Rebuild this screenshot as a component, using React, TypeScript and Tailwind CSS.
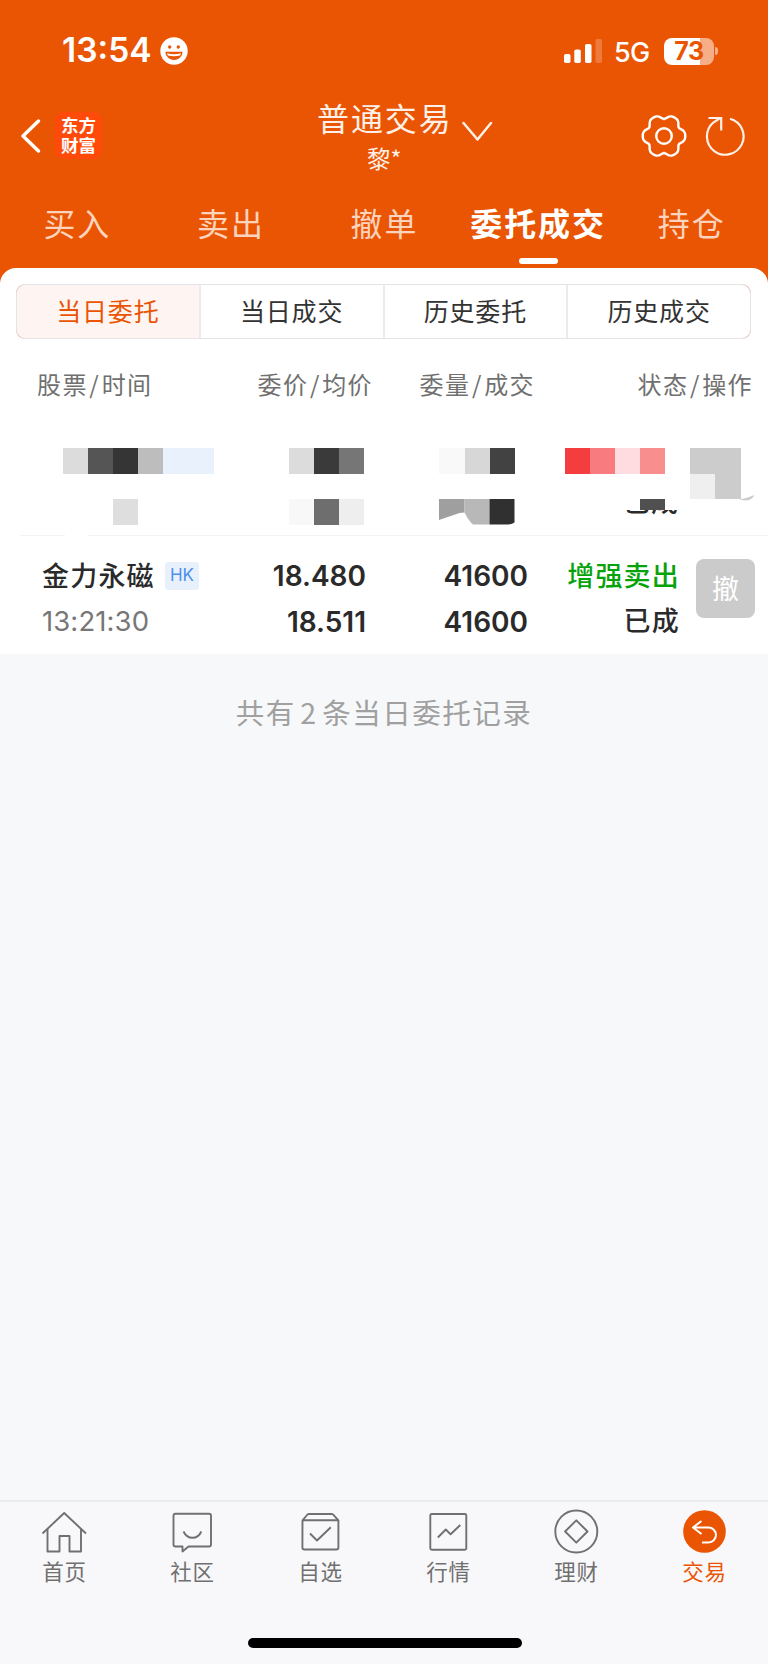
import type { ReactNode } from 'react'

const cjk = "font-['Noto_Sans_CJK_SC',sans-serif]"
const latin = "font-['Inter','Liberation_Sans',sans-serif]"

const tabs = ['买入', '卖出', '撤单', '委托成交', '持仓']
const segments = ['当日委托', '当日成交', '历史委托', '历史成交']

// Mosaic cells covering the hidden order, placed on a 25px grid
const mosaic = [
  'col-start-1 row-start-1 bg-[#dcdcdc]',
  'col-start-2 row-start-1 bg-[#555555]',
  'col-start-3 row-start-1 bg-[#353535]',
  'col-start-4 row-start-1 bg-[#bdbdbd]',
  'col-start-5 col-span-2 row-start-1 bg-[#e8f1fc]',
  'col-start-10 row-start-1 bg-[#dcdcdc]',
  'col-start-11 row-start-1 bg-[#3a3a3a]',
  'col-start-12 row-start-1 bg-[#767676]',
  'col-start-16 row-start-1 bg-[#f9f9f9]',
  'col-start-17 row-start-1 bg-[#d7d7d7]',
  'col-start-18 row-start-1 bg-[#424242]',
  'col-start-21 row-start-1 bg-[#f43d3f]',
  'col-start-22 row-start-1 bg-[#f87c7f]',
  'col-start-23 row-start-1 bg-[#fedcdf]',
  'col-start-24 row-start-1 bg-[#f98e8f]',
  'col-start-26 col-span-2 row-start-1 bg-[#cccccc]',
  'col-start-26 row-start-2 bg-[#efefef]',
  'col-start-27 row-start-2 bg-[#cccccc]',
  'col-start-3 row-start-3 bg-[#dedede]',
  'col-start-10 row-start-3 bg-[#f8f8f8]',
  'col-start-11 row-start-3 bg-[#6e6e6e]',
  'col-start-12 row-start-3 bg-[#eeeeee]',
  'col-start-24 row-start-3 h-[11px] bg-[#505050]',
]

function StatusBar() {
  return (
    <div className={`flex h-[102px] items-center pl-[62px] pr-[50px] text-white ${latin}`}>
      <span className="w-[98px] text-[33.5px] font-semibold leading-none">13:54</span>
      <svg width="28" height="28" viewBox="0 0 28 28">
        <circle cx="14" cy="14" r="13.7" fill="#fff" />
        <circle cx="9.700" cy="10" r="1.700" fill="#ea5504" />
        <circle cx="18.300" cy="10" r="1.700" fill="#ea5504" />
        <path d="M5.500 14.800h17c0 4.600-3.700 8.200-8.500 8.200s-8.500-3.600-8.500-8.200z" fill="#ea5504" />
        <path d="M7 16.300q7 1.800 14 0l-.9 2.300q-6 1.400-12.200 0z" fill="#fff" />
      </svg>
      <svg className="ml-auto" width="40" height="26" viewBox="0 0 40 26">
        <rect x="1" y="16" width="6.500" height="9" rx="1.800" fill="#fff" />
        <rect x="11.300" y="11.500" width="6.500" height="13.500" rx="1.800" fill="#fff" />
        <rect x="22" y="6" width="6.500" height="19" rx="1.800" fill="#fff" />
        <rect x="32.500" y="1" width="6.500" height="24" rx="1.800" fill="#fff" opacity=".22" />
      </svg>
      <span className="ml-[11px] mt-[2px] w-[38px] text-[27px] font-medium leading-none tracking-[-0.6px]">5G</span>
      <div className="ml-[12px] flex h-[27px] w-[50px] items-center justify-center rounded-[8px] bg-[linear-gradient(90deg,#fff_73%,#f5ae86_73%)] text-[25px] font-bold leading-none tracking-[-0.5px] text-[#ea5504]">
        73
      </div>
      <div className="ml-[1px] h-[8px] w-[3px] rounded-r-full bg-[#f5ae86]" />
    </div>
  )
}

function GearIcon() {
  const points = Array.from({ length: 120 }, (_, i) => {
    const a = (i * Math.PI) / 60
    const r = 19.6 + 2.1 * Math.cos(6 * a) - 0.45 * Math.cos(12 * a)
    return `${(23 + r * Math.cos(a)).toFixed(2)},${(23 + r * Math.sin(a)).toFixed(2)}`
  })
  return (
    <svg width="46" height="46" viewBox="0 0 46 46" fill="none" stroke="#fff" strokeWidth="2.400">
      <polygon points={points.join(' ')} strokeLinejoin="round" />
      <circle cx="23" cy="23" r="7.800" />
    </svg>
  )
}

function Header() {
  return (
    <div className="flex h-[80px] items-start">
      <svg className="ml-[20px] mt-[16px]" width="22" height="36" viewBox="0 0 22 36" fill="none" stroke="#fff" strokeWidth="3.500" strokeLinecap="round" strokeLinejoin="round">
        <path d="M18.500 3L3 18l15.500 15" />
      </svg>
      <div className="ml-[13px] mt-[10px] flex h-[47px] w-[47px] flex-col items-center justify-center rounded-[9px] bg-[#ff4a0a] pb-[2px] font-['Noto_Sans_CJK_SC',sans-serif] text-[17.5px] font-bold leading-[19.5px] text-white">
        <span>东方</span>
        <span>财富</span>
      </div>
      <div className="-mt-[1px] ml-[215px] flex w-[134px] flex-col text-[#fff1e8]">
        <span className={`${cjk} whitespace-nowrap text-[32px] leading-[32px] tracking-[1.900px]`}>普通交易</span>
        <span className={`${cjk} mt-[13px] pl-[50px] text-[23.5px] leading-[24px]`}>黎*</span>
      </div>
      <svg className="ml-[11px] mt-[19px]" width="32" height="22" viewBox="0 0 32 22" fill="none" stroke="#fff1e8" strokeWidth="2.500" strokeLinecap="round" strokeLinejoin="round">
        <path d="M1.500 2L15.500 18.500L29 2" />
      </svg>
      <div className="ml-[146.5px] mt-[11px]">
        <GearIcon />
      </div>
      <svg className="ml-[18px] mt-[13px]" width="42" height="42" viewBox="0 0 42 42" fill="none" stroke="#fff1e8" strokeWidth="2.200">
        <path d="M25 3.700A18.300 18.300 0 1 1 8 7.800L14.500 3.500" />
        <path d="M3.500 3h12.700v12.500" />
      </svg>
    </div>
  )
}

function Tabs() {
  return (
    <div className={`flex h-[86px] ${cjk} text-[32px] leading-[80px] tracking-[1.900px]`}>
      {tabs.map((tab) => {
        const active = tab === '委托成交'
        return (
          <div key={tab} className={`flex flex-1 flex-col items-center whitespace-nowrap pl-[1px] ${active ? 'font-bold text-white' : 'font-normal text-[#fcd3bc]'}`}>
            <span className="h-[76px]">{tab}</span>
            {active && <span className="h-[6px] w-[39px] rounded-full bg-white" />}
          </div>
        )
      })}
    </div>
  )
}

function ColumnLabel({ top, bottom, className }: { top: string; bottom: string; className: string }) {
  return (
    <span className={className}>
      {top}
      <span className="mx-[1.5px]">/</span>
      {bottom}
    </span>
  )
}

function HiddenOrder() {
  return (
    <div className="relative h-[123px] w-full pl-[63px] pt-[35px]">
      <div className="grid auto-rows-[25.600px] grid-cols-[repeat(27,25.100px)]">
        {mosaic.map((cell) => (
          <div key={cell} className={cell} />
        ))}
        <svg className="col-span-3 col-start-16 row-start-3" width="76" height="26" viewBox="0 0 76 26">
          <path d="M0 0h25.500v13.500l-5 .5L0 21z" fill="#9f9f9f" />
          <path d="M25.500 0h25v25.600H34q-4-3-8.500-12z" fill="#b8b8b8" />
          <path d="M50.500 0h25v23.500q-3 2-7 2.100h-18z" fill="#303030" />
        </svg>
      </div>
      <div className={`absolute right-[89px] top-[97px] flex h-[5px] items-end overflow-hidden ${cjk} text-[27px] font-medium leading-[28px] tracking-[1px] text-[#2a2a2a]`}>
        <span>已成</span>
      </div>
      <svg className="absolute left-[739px] top-[82px]" width="16" height="6" viewBox="0 0 16 6">
        <path d="M0 4.500Q9 3 15.500 0Q13 5.500 6 5.500z" fill="#cccccc" />
      </svg>
      <div className="absolute bottom-0 left-[20px] right-0 flex h-[1px]">
        <div className="w-[45px] bg-[#f3f3f4]" />
        <div className="ml-[23px] flex-1 bg-[#f3f3f4]" />
      </div>
    </div>
  )
}

function OrderRow() {
  return (
    <div className="flex h-[118px] pt-[17px] text-[#2a2a2a]">
      <div className="w-[218px] pl-[42px]">
        <div className="flex h-[45px] items-center">
          <span className={`${cjk} -mt-[2px] w-[123px] whitespace-nowrap text-[27px] font-medium leading-[42px] tracking-[1.200px]`}>金力永磁</span>
          <span className={`${latin} flex h-[28px] w-[34px] items-center justify-center rounded-[3px] bg-[#e8f1fb] pt-[1px] text-[17px] text-[#4a90f0]`}>HK</span>
        </div>
        <div className={`${latin} flex h-[46px] items-center pt-[2px] text-[27.5px] tracking-[0.1px] text-[#777777]`}>13:21:30</div>
      </div>
      <div className={`${latin} w-[148px] pt-[1px] text-right text-[28px] font-semibold leading-[45.500px]`}>
        <div>18.480</div>
        <div>18.511</div>
      </div>
      <div className={`${latin} w-[162px] pt-[1px] text-right text-[28px] font-semibold leading-[45.500px]`}>
        <div>41600</div>
        <div>41600</div>
      </div>
      <div className={`${cjk} -mt-[1px] w-[152px] text-right text-[27px] font-medium leading-[45px] tracking-[1.200px]`}>
        <div className="h-[45px] text-[#08a30b]">增强卖出</div>
        <div>已成</div>
      </div>
      <div className={`${cjk} ml-[16px] mt-[6px] flex h-[59px] w-[59px] items-center justify-center rounded-[8px] bg-[#cbcbcb] pb-[3px] text-[27px] leading-none text-white`}>
        撤
      </div>
    </div>
  )
}

function NavIcon({ children }: { children: ReactNode }) {
  return (
    <svg width="48" height="48" viewBox="0 0 48 48" fill="none" stroke="#707070" strokeWidth="1.900" strokeLinejoin="round">
      {children}
    </svg>
  )
}

const navItems = [
  {
    label: '首页',
    icon: (
      <>
        <path d="M2.500 25.500L24.200 5L46 25.500" />
        <path d="M7.500 21v22.500h12V28h10v15.500h11.500V21" />
      </>
    ),
  },
  {
    label: '社区',
    icon: (
      <>
        <path d="M7.500 5.700h33.500a2 2 0 0 1 2 2v28.800a2 2 0 0 1-2 2H20.500L14.500 43.500V38.500H7.500a2 2 0 0 1-2-2V7.700a2 2 0 0 1 2-2z" />
        <path d="M15.500 23.500Q18.500 29.800 24.500 29.800T33.300 23.500" />
      </>
    ),
  },
  {
    label: '自选',
    icon: (
      <>
        <path d="M6.500 12.300L11.500 6.500Q12 6 13 6h22.500q1 0 1.700.6l5.200 5.700v27.200a2 2 0 0 1-2 2h-32a2 2 0 0 1-2-2zM6.500 12.300h36" />
        <path d="M14 25.500l7 7L34.800 19.300" />
      </>
    ),
  },
  {
    label: '行情',
    icon: (
      <>
        <rect x="6.300" y="6" width="36" height="35.700" rx="1.500" />
        <path d="M13.800 29.500l8-8 4.800 4.800 9.700-9.300" />
      </>
    ),
  },
  {
    label: '理财',
    icon: (
      <>
        <circle cx="24.300" cy="23.500" r="21" />
        <path d="M24.300 12.300l11.200 11.200-11.200 11.200-11.200-11.200z" />
      </>
    ),
  },
  {
    label: '交易',
    active: true,
    icon: (
      <>
        <circle cx="24.500" cy="23.500" r="21.300" fill="#ea5504" stroke="none" />
        <path d="M21.500 13l-8.500 6.500 8.500 6.500M13 19.500h15.500a7.300 7.300 0 0 1 0 14.900h-6.500" stroke="#fff" strokeWidth="2" />
      </>
    ),
  },
]

function BottomNav() {
  return (
    <nav className="flex h-[164px] flex-col border-t-2 border-[#ebecee] bg-[#f8f8fa]">
      <div className="grid grid-cols-6 pt-[6px]">
        {navItems.map((item) => (
          <div key={item.label} className="flex flex-col items-center">
            <NavIcon>{item.icon}</NavIcon>
            <span className={`${cjk} mt-[2px] pl-[1px] text-[21.500px] leading-[26px] tracking-[0.700px] ${item.active ? 'text-[#ea5504]' : 'text-[#707070]'}`}>
              {item.label}
            </span>
          </div>
        ))}
      </div>
      <div className="ml-[248px] mt-[54px] h-[10px] w-[274px] rounded-full bg-black" />
    </nav>
  )
}

export default function App() {
  return (
    <div className="flex h-[1664px] w-[768px] flex-col overflow-hidden bg-[#f7f8fa]">
      <div className="h-[268px] bg-[#ea5504]">
        <StatusBar />
        <Header />
        <Tabs />
      </div>

      <div className="bg-[#ea5504]">
        <div className="rounded-t-[16px] bg-white pt-[16px]">
          {/* The orange underlay shows through at the rounded corners */}
          <div className="mx-[16px] w-[735px] rounded-[9px] bg-[linear-gradient(90deg,#f3b394_8px,transparent_8px,transparent_727px,#f3b394_727px)]">
            <div className={`flex h-[55px] overflow-hidden rounded-[10px] border border-[#e4e4e8] bg-white ${cjk} text-[25px] leading-[51px] tracking-[0.8px]`}>
              {segments.map((label, i) => (
                <div
                  key={label}
                  className={`flex-1 text-center ${i === 0 ? 'bg-[#fef5f2] text-[#ea5504]' : 'border-l-2 border-[#ebebef] text-[#333333]'}`}
                >
                  {label}
                </div>
              ))}
            </div>
          </div>

          <div className={`flex h-[74px] pt-[20px] ${cjk} text-[24px] leading-[50px] tracking-[1.400px] text-[#707070]`}>
            <ColumnLabel className="w-[221px] pl-[37px]" top="股票" bottom="时间" />
            <ColumnLabel className="w-[152px] text-right" top="委价" bottom="均价" />
            <ColumnLabel className="w-[162px] text-right" top="委量" bottom="成交" />
            <ColumnLabel className="w-[218px] text-right" top="状态" bottom="操作" />
          </div>

          <HiddenOrder />
          <OrderRow />
        </div>
      </div>

      <div className={`flex-1 pt-[36px] text-center ${cjk} text-[28.500px] leading-[44px] tracking-[1.500px] text-[#a0a0a0]`}>
        共有<span className="mx-[4.5px]">2</span>条当日委托记录
      </div>

      <BottomNav />
    </div>
  )
}
